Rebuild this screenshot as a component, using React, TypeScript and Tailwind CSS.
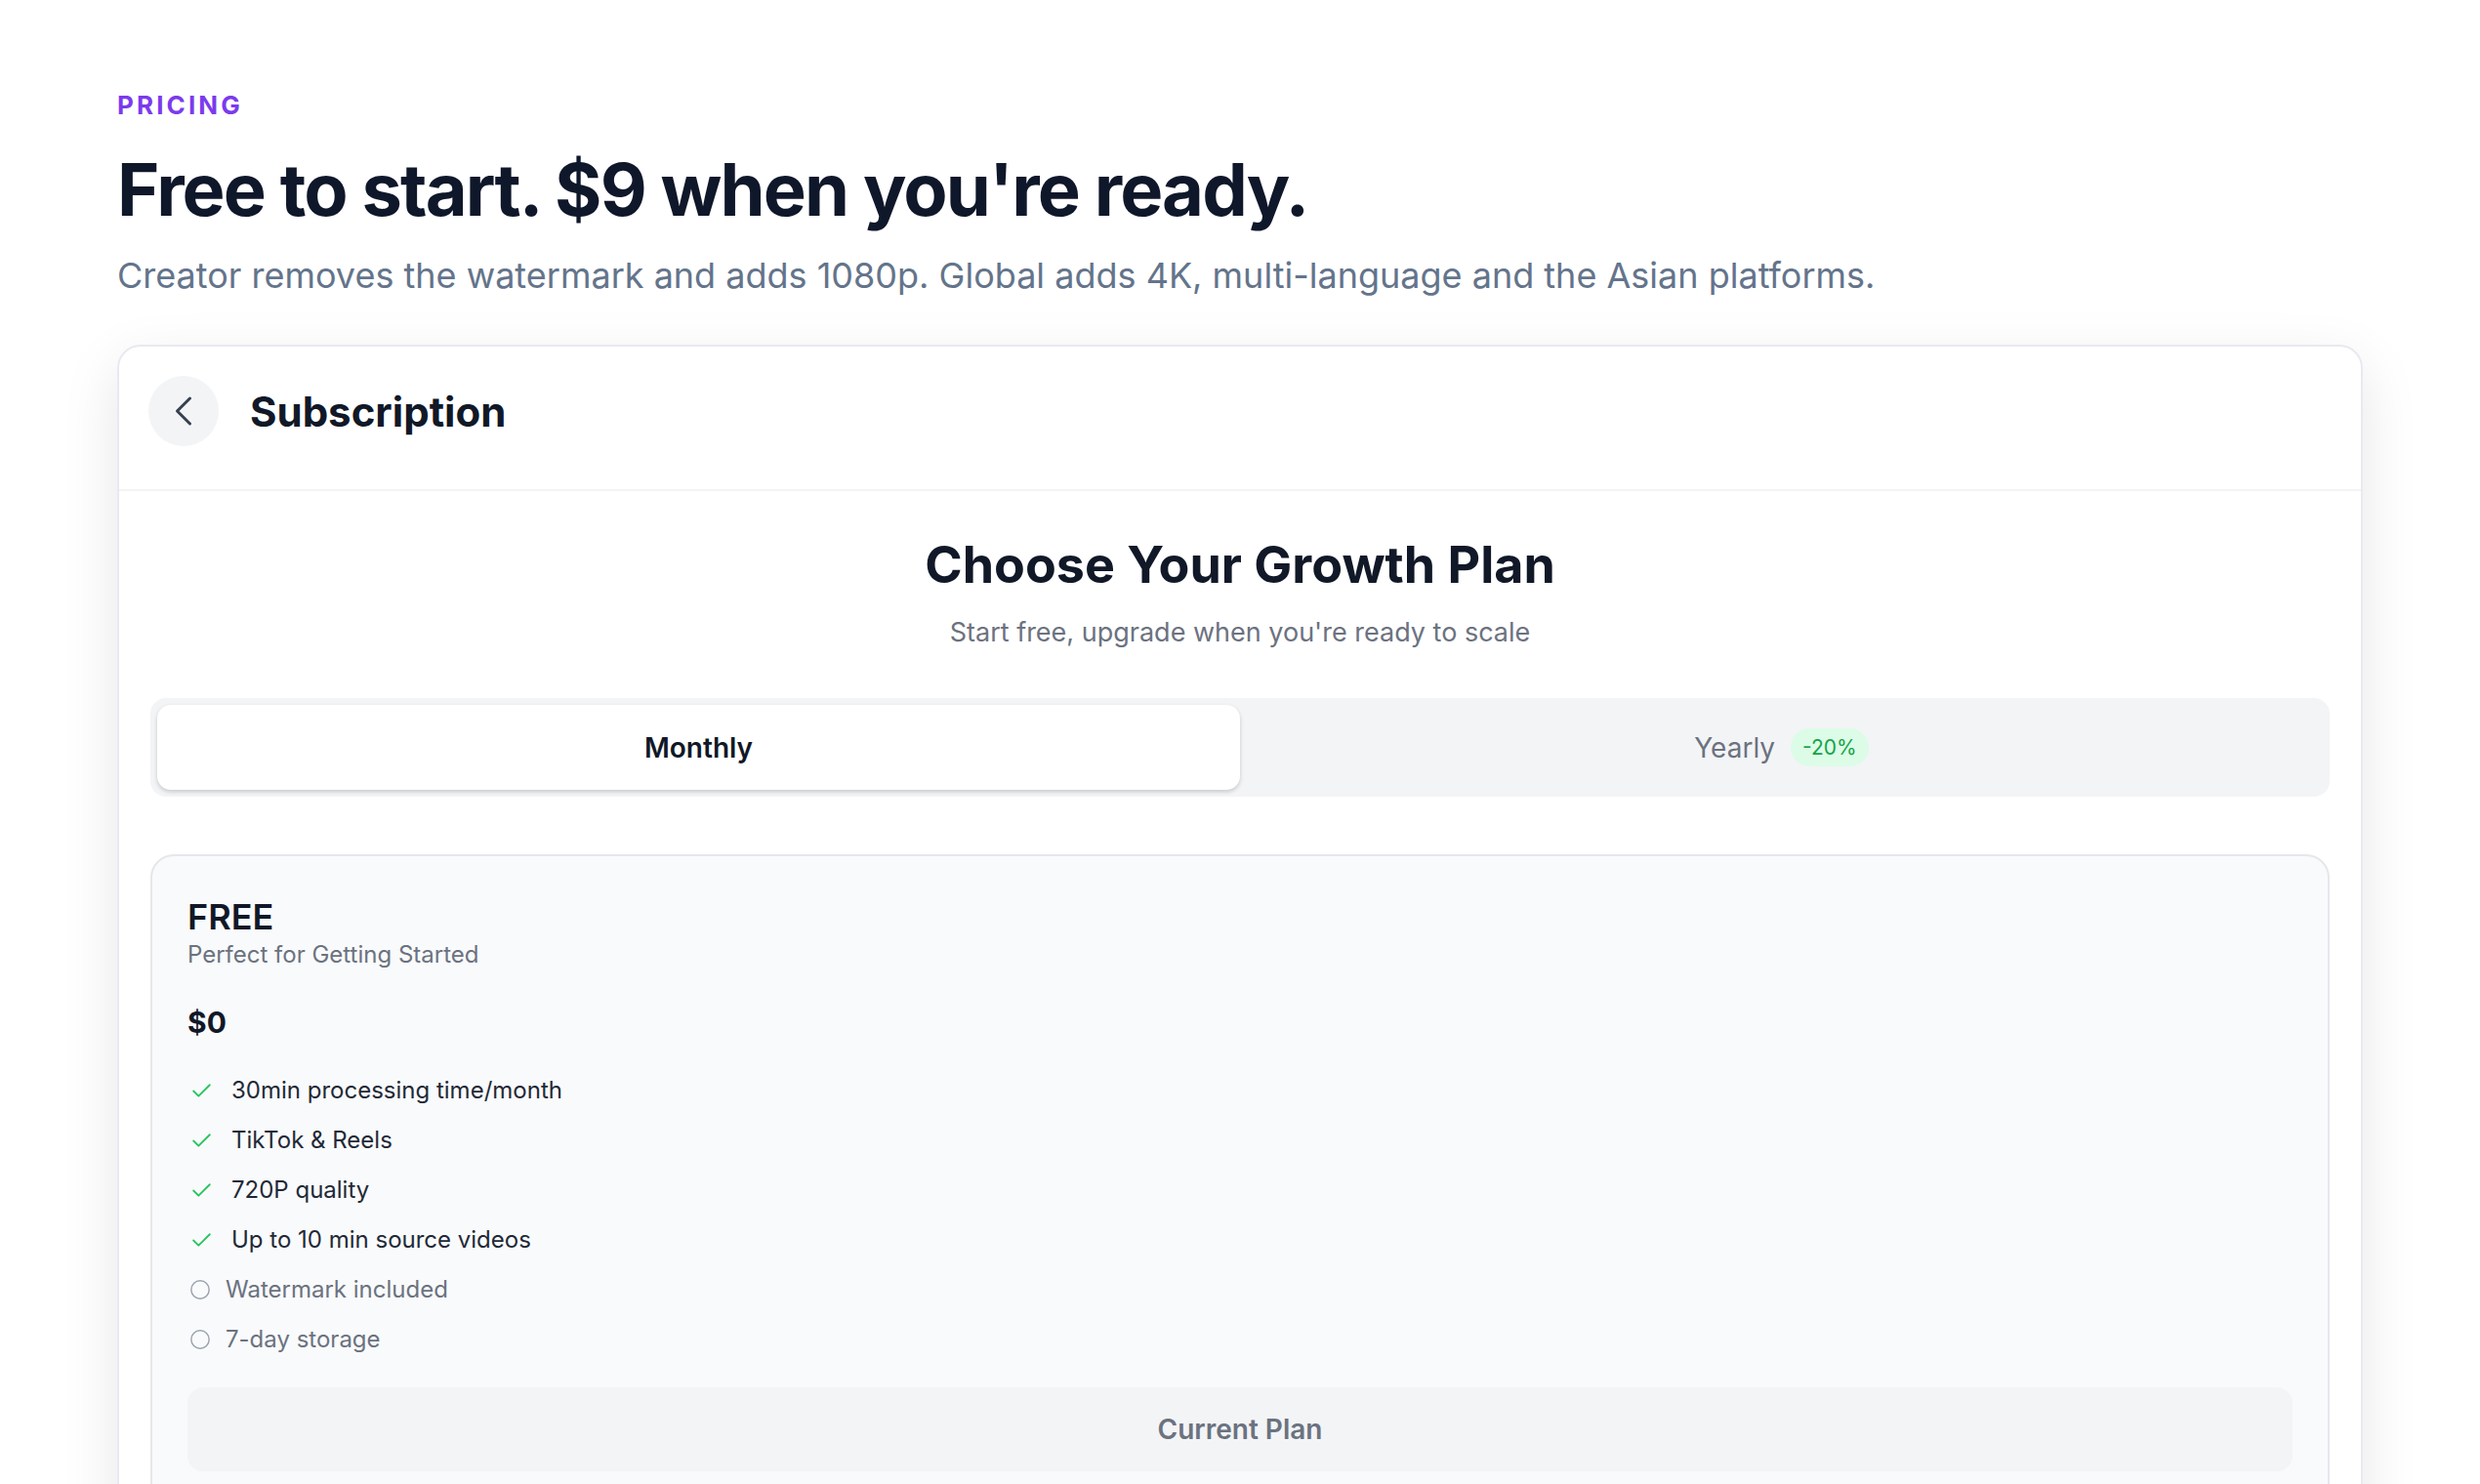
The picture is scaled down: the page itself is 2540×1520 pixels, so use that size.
import React, { useState } from 'react'
import { Check, ChevronLeft, Circle } from 'lucide-react'

type Feature = { label: string; included: boolean }

const freeFeatures: Feature[] = [
  { label: '30min processing time/month', included: true },
  { label: 'TikTok & Reels', included: true },
  { label: '720P quality', included: true },
  { label: 'Up to 10 min source videos', included: true },
  { label: 'Watermark included', included: false },
  { label: '7-day storage', included: false },
]

const BillingToggle: React.FC<{
  period: 'monthly' | 'yearly'
  onChange: (p: 'monthly' | 'yearly') => void
}> = ({ period, onChange }) => (
  <div className="flex h-[101px] rounded-2xl bg-[#f3f4f6] p-[7px]">
    <button
      type="button"
      onClick={() => onChange('monthly')}
      className={
        period === 'monthly'
          ? 'flex flex-1 items-center justify-center rounded-[14px] bg-white text-[28px] font-semibold text-[#111827] shadow-[0_2px_4px_rgba(0,0,0,0.18)]'
          : 'flex flex-1 items-center justify-center rounded-[14px] text-[28px] text-[#6b7280]'
      }
    >
      Monthly
    </button>
    <button
      type="button"
      onClick={() => onChange('yearly')}
      className={
        period === 'yearly'
          ? 'flex flex-1 items-center justify-center gap-4 rounded-[14px] bg-white text-[28px] font-semibold text-[#111827] shadow-[0_2px_4px_rgba(0,0,0,0.18)]'
          : 'flex flex-1 items-center justify-center gap-4 rounded-[14px] text-[28px] text-[#6b7280]'
      }
    >
      <span>Yearly</span>
      <span className="rounded-full bg-[#dcfce7] px-3 py-1 text-[21px] text-[#16a34a]">
        -20%
      </span>
    </button>
  </div>
)

const PlanCard: React.FC = () => (
  <div className="rounded-3xl border-2 border-[#e5e7eb] bg-[#f9fafb] px-9 pt-10 pb-9">
    <h3 className="text-[36px] font-semibold leading-[44px] text-[#111827]">FREE</h3>
    <p className="text-[24px] leading-[34px] text-[#6b7280]">Perfect for Getting Started</p>
    <div className="mt-[34px] text-[30px] font-bold leading-[36px] text-[#111827]">$0</div>
    <ul className="mt-[36px] flex flex-col gap-[19px]">
      {freeFeatures.map((f) =>
        f.included ? (
          <li key={f.label} className="flex items-center gap-[18px] pl-[2px] text-[24px] leading-[32px] text-[#1f2937]">
            <Check className="h-[25px] w-[25px] text-[#22c55e]" strokeWidth={1.7} />
            <span>{f.label}</span>
          </li>
        ) : (
          <li key={f.label} className="flex items-center gap-[15px] pl-[2px] text-[24px] leading-[32px] text-[#6b7280]">
            <Circle className="h-[22px] w-[22px] text-[#9ca3af]" strokeWidth={1.6} />
            <span>{f.label}</span>
          </li>
        ),
      )}
    </ul>
    <button
      type="button"
      className="mt-[33px] flex h-[86px] w-full items-center justify-center rounded-2xl bg-[#f3f4f6] text-[28px] font-semibold text-[#6b7280]"
    >
      Current Plan
    </button>
  </div>
)

const App: React.FC = () => {
  const [period, setPeriod] = useState<'monthly' | 'yearly'>('monthly')

  return (
    <div className="min-h-screen bg-white px-[120px] pt-[92px] font-['Inter',sans-serif]">
      <p className="text-[26px] font-bold leading-[32px] tracking-[0.12em] text-[#7c3aed]">
        PRICING
      </p>
      <h1 className="mt-[33px] text-[74px] font-bold leading-none tracking-tight text-[#0f172a]">
        Free to start. $9 when you're ready.
      </h1>
      <p className="mt-[27px] text-[36px] leading-[48px] text-[#64748b]">
        Creator removes the watermark and adds 1080p. Global adds 4K, multi-language and the Asian
        platforms.
      </p>

      <div className="mt-[47px] overflow-hidden rounded-3xl border-2 border-[#e8e9f2] bg-white shadow-[0_20px_60px_rgba(15,23,42,0.10)]">
        <div className="flex items-center gap-8 border-b-2 border-[#f3f4f6] px-[30px] pt-[30px] pb-[44px]">
          <button
            type="button"
            className="flex h-[72px] w-[72px] items-center justify-center rounded-full bg-[#f3f4f6] text-[#374151]"
          >
            <ChevronLeft className="h-[52px] w-[52px]" strokeWidth={1.4} />
          </button>
          <h2 className="text-[42px] font-bold text-[#111827]">Subscription</h2>
        </div>

        <div className="px-8 pt-[46px] pb-12">
          <div className="text-center">
            <h2 className="text-[52px] font-bold leading-[60px] text-[#111827]">
              Choose Your Growth Plan
            </h2>
            <p className="mt-[20px] text-[27px] leading-[38px] text-[#6b7280]">
              Start free, upgrade when you're ready to scale
            </p>
          </div>

          <div className="mt-[48px]">
            <BillingToggle period={period} onChange={setPeriod} />
          </div>

          <div className="mt-[59px]">
            <PlanCard />
          </div>
        </div>
      </div>
    </div>
  )
}

export default App
